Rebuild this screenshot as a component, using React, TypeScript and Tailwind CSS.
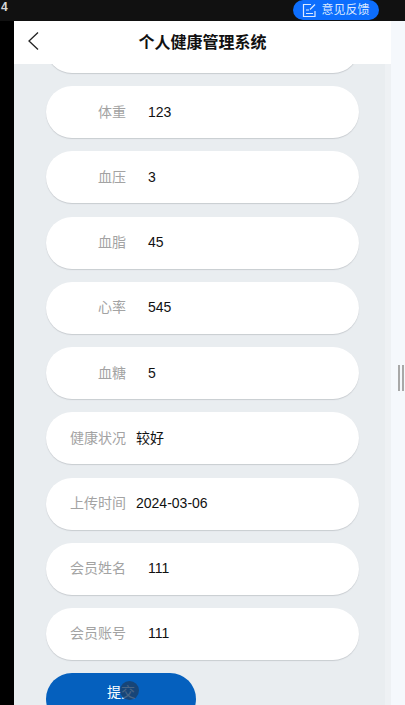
const rows: [string, string, boolean][] = [
  ["体重", "123", false],
  ["血压", "3", false],
  ["血脂", "45", false],
  ["心率", "545", false],
  ["血糖", "5", false],
  ["健康状况", "较好", true],
  ["上传时间", "2024-03-06", true],
  ["会员姓名", "111", false],
  ["会员账号", "111", false],
];

function Row({ label, value, wide }: { label: string; value: string; wide: boolean }) {
  return (
    <div className="flex h-[52px] w-[313px] shrink-0 items-center rounded-[26px] bg-white shadow-[0_1px_1px_#c8ccd0]">
      <span className="w-[80px] shrink-0 text-right text-[14px] text-[#a3a3a3]">{label}</span>
      {wide ? (
        <span className="ml-[10px] text-[14px] text-[#111]">{value}</span>
      ) : (
        <span className="ml-[22px] text-[14px] text-[#111]">{value}</span>
      )}
    </div>
  );
}

export default function App() {
  return (
    <div className="flex h-[705px] w-[405px] flex-col overflow-hidden bg-black font-['Liberation_Sans','Noto_Sans_CJK_SC',sans-serif]">
      <div className="flex h-[21px] shrink-0 items-start justify-between bg-[#111]">
        <span className="ml-[1px] text-[12px] font-bold leading-[15px] text-[#d8d8d8]">4</span>
        <div className="mr-[26px] flex h-[20px] w-[86px] items-center justify-center gap-[4px] rounded-[10px] bg-[#0d6efd]">
          <svg width="15" height="15" viewBox="0 0 15 15" fill="none" stroke="#dbe9ff" strokeWidth="1.2">
            <path d="M13 8V13.5H1.5V1.5H9" />
            <path d="M4 7H7M4 10.5H11" />
            <path d="M8 6.5L13 1.5" />
          </svg>
          <span className="text-[12px] leading-[20px] text-[#dbe9ff]">意见反馈</span>
        </div>
      </div>
      <div className="flex min-h-0 flex-1 pl-[14px]">
        <div className="flex w-[377px] shrink-0 flex-col">
          <div className="relative z-10 flex h-[43px] shrink-0 items-center justify-center bg-white">
            <svg className="absolute left-[13px] top-[10px]" width="13" height="20" viewBox="0 0 13 20" fill="none" stroke="#222" strokeWidth="1.3">
              <path d="M11 1.5L2 10L11 18.5" />
            </svg>
            <span className="text-[16px] font-bold text-[#111]">个人健康管理系统</span>
          </div>
          <div className="relative flex min-h-0 flex-1 flex-col gap-[13.22px] overflow-hidden bg-[#e9edf0] pl-[32px]">
            <div className="-mt-[43px] h-[52px] w-[313px] shrink-0 rounded-[26px] bg-white shadow-[0_1px_1px_#c8ccd0]" />
            {rows.map(([l, v, w]) => (
              <Row key={l} label={l} value={v} wide={w} />
            ))}
            <button className="relative flex h-[52px] w-[150px] shrink-0 items-start justify-center rounded-[26px] bg-[#0560be] pt-[9px] text-[14px] text-white">
              提交
              <span className="absolute left-[74px] top-[8px] h-[19px] w-[19px] rounded-full bg-[#1b3f66] opacity-80" />
            </button>
            <div className="absolute right-0 top-0 h-full w-[6px] bg-[#eef1f4]" />
          </div>
        </div>
        <div className="relative flex-1 bg-[#f5f8fc]">
          <div className="absolute left-[7px] top-[344px] h-[26px] w-[6px] border-x-2 border-[#a8a8a8]" />
        </div>
      </div>
    </div>
  );
}
